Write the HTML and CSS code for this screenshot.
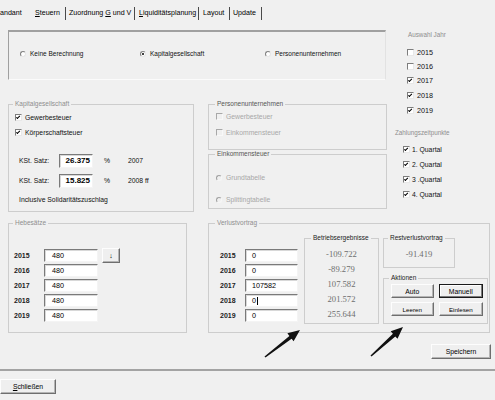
FILE: index.html
```html
<!DOCTYPE html>
<html lang="de">
<head>
<meta charset="utf-8">
<title>Steuern</title>
<link rel="stylesheet" href="styles.css">
</head>
<body>
<div class="win">
  <nav class="tabs">
    <span class="tab t-mandant">andant</span>
    <span class="tab t-steuern"><u>S</u>teuern</span>
    <span class="tab t-zuord">Zuordnung <u>G</u> und V</span>
    <span class="tab t-liq"><u>L</u>iquiditätsplanung</span>
    <span class="tab t-layout">Layout</span>
    <span class="tab t-update">Update</span>
  </nav>

  <div class="upper">
    <div class="leftcol">
      <div class="topframe">
        <div class="opt"><span class="radio"></span>Keine Berechnung</div>
        <div class="opt"><span class="radio on"></span>Kapitalgesellschaft</div>
        <div class="opt"><span class="radio"></span>Personenunternehmen</div>
      </div>
      <div class="groups">
        <fieldset class="grp kap">
          <legend class="lg lg-gray lg-4">Kapitalgesellschaft</legend>
          <div class="body kap-body">
            <div class="row"><span class="cb on"></span>Gewerbesteuer</div>
            <div class="row"><span class="cb on"></span>Körperschaftsteuer</div>
            <div class="row kst first">
              <span class="kst-lbl">KSt. Satz:</span>
              <span class="inp num">26.375</span>
              <span class="pct">%</span>
              <span>2007</span>
            </div>
            <div class="row kst second">
              <span class="kst-lbl">KSt. Satz:</span>
              <span class="inp num">15.825</span>
              <span class="pct">%</span>
              <span>2008 ff</span>
            </div>
            <div class="row incl">Inclusive Solidaritätszuschlag</div>
          </div>
        </fieldset>
        <div class="pcol">
          <fieldset class="grp pers">
            <legend class="lg lg-dark lg-6">Personenunternehmen</legend>
            <div class="body pers-body">
              <div class="row dis"><span class="cb dis"></span>Gewerbesteuer</div>
              <div class="row dis"><span class="cb dis"></span>Einkommensteuer</div>
            </div>
          </fieldset>
          <fieldset class="grp eink">
            <legend class="lg lg-dark lg-6">Einkommensteuer</legend>
            <div class="body eink-body">
              <div class="row dis"><span class="radio dis"></span>Grundtabelle</div>
              <div class="row dis second"><span class="radio dis"></span>Splittingtabelle</div>
            </div>
          </fieldset>
        </div>
      </div>
    </div>

    <div class="rightcol">
      <div class="hdr hdr-jahr">Auswahl Jahr</div>
      <div class="years">
        <div class="row yr h14"><span class="cb"></span>2015</div>
        <div class="row yr h14"><span class="cb"></span>2016</div>
        <div class="row yr"><span class="cb on"></span>2017</div>
        <div class="row yr"><span class="cb on"></span>2018</div>
        <div class="row yr"><span class="cb on"></span>2019</div>
      </div>
      <div class="hdr hdr-zahl">Zahlungszeitpunkte</div>
      <div class="quartale">
        <div class="row qt"><span class="cb on"></span>1. Quartal</div>
        <div class="row qt"><span class="cb on"></span>2. Quartal</div>
        <div class="row qt"><span class="cb on"></span>3 .Quartal</div>
        <div class="row qt"><span class="cb on"></span>4. Quartal</div>
      </div>
    </div>
  </div>

  <div class="lower">
    <fieldset class="grp hebe">
      <legend class="lg lg-gray lg-4">Hebesätze</legend>
      <div class="body hebe-body">
        <div class="row yrow"><span class="ylbl">2015</span><span class="inp hinp">480</span><span class="btn down">↓</span></div>
        <div class="row yrow"><span class="ylbl">2016</span><span class="inp hinp">480</span></div>
        <div class="row yrow"><span class="ylbl">2017</span><span class="inp hinp">480</span></div>
        <div class="row yrow"><span class="ylbl">2018</span><span class="inp hinp">480</span></div>
        <div class="row yrow"><span class="ylbl">2019</span><span class="inp hinp">480</span></div>
      </div>
    </fieldset>

    <fieldset class="grp verl">
      <legend class="lg lg-gray lg-6">Verlustvortrag</legend>
      <div class="body verl-body">
        <div class="vrows">
          <div class="row yrow"><span class="ylbl vl">2015</span><span class="inp vinp">0</span></div>
          <div class="row yrow"><span class="ylbl vl">2016</span><span class="inp vinp">0</span></div>
          <div class="row yrow"><span class="ylbl vl">2017</span><span class="inp vinp">107582</span></div>
          <div class="row yrow"><span class="ylbl vl">2018</span><span class="inp vinp">0<span class="caret"></span></span></div>
          <div class="row yrow"><span class="ylbl vl">2019</span><span class="inp vinp">0</span></div>
        </div>
        <fieldset class="grp betr">
          <legend class="lg lg-black lg-6">Betriebsergebnisse</legend>
          <div class="body betr-body">
            <div class="val">-109.722</div>
            <div class="val">-89.279</div>
            <div class="val">107.582</div>
            <div class="val">201.572</div>
            <div class="val">255.644</div>
          </div>
        </fieldset>
        <div class="rcol">
          <fieldset class="grp rest">
            <legend class="lg lg-black lg-4">Restverlustvortrag</legend>
            <div class="body rest-body">
              <div class="val">-91.419</div>
            </div>
          </fieldset>
          <fieldset class="grp akt">
            <legend class="lg lg-black lg-5">Aktionen</legend>
            <div class="body akt-body">
              <div class="brow">
                <span class="btn ab w43">Auto</span>
                <span class="btn ab w45 default">Manuell</span>
              </div>
              <div class="brow second">
                <span class="btn ab w43 small">Leeren</span>
                <span class="btn ab w45 small">Einlesen</span>
              </div>
            </div>
          </fieldset>
        </div>
      </div>
    </fieldset>
  </div>

  <div class="saverow"><span class="btn save">Speichern</span></div>
  <div class="sep"></div>
  <div class="closerow"><span class="btn close"><u>S</u>chließen</span></div>

  <svg class="arrows" width="495" height="400" viewBox="0 0 495 400" aria-hidden="true">
    <polygon points="300,330 293.6,341.3 291.6,338.7 265.5,357.6 264.5,356.4 289.4,335.9 287.4,333.3" fill="#111"/>
    <polygon points="403,327 397.5,338.8 395.3,336.4 371.5,356.6 370.5,355.4 392.9,333.7 390.7,331.3" fill="#111"/>
  </svg>
</div>
</body>
</html>
```

FILE: styles.css
```css
html, body {
  margin: 0;
  padding: 0;
  background: #f0f0f0;
}

.win {
  position: relative;
  width: 495px;
  height: 400px;
  overflow: hidden;
  background: #f0f0f0;
  font-family: "Liberation Sans", Arial, sans-serif;
  font-size: 6.8px;
  color: #111;
}

/* ---------- tabs ---------- */
.tabs {
  display: flex;
  align-items: flex-start;
  height: 30px;
  padding-top: 7px;
  box-sizing: border-box;
  font-size: 7.1px;
  color: #000;
}
.tab {
  height: 13px;
  line-height: 13px;
  box-sizing: border-box;
  border-right: 1px solid #4a4a4a;
  white-space: nowrap;
}
.t-mandant { margin-left: 0; width: 35px; border-right: none; }
.t-steuern { width: 31px; }
.t-zuord { width: 69px; padding-left: 3px; }
.t-liq { width: 64px; padding-left: 4px; }
.t-layout { width: 31px; padding-left: 4px; }
.t-update { width: 32px; padding-left: 3px; }

/* ---------- common controls ---------- */
.row {
  display: flex;
  align-items: center;
  height: 15px;
  white-space: nowrap;
}
.cb {
  position: relative;
  flex: none;
  width: 7px;
  height: 7px;
  box-sizing: border-box;
  background: #fff;
  border: 1px solid;
  border-color: #7d7d7d #e8e8e8 #e8e8e8 #7d7d7d;
  margin-right: 3px;
}
.cb.on::after {
  content: "";
  position: absolute;
  left: 1.3px;
  top: -0.2px;
  width: 1.4px;
  height: 3.2px;
  border: solid #000;
  border-width: 0 1.2px 1.2px 0;
  transform: rotate(45deg);
}
.cb.dis {
  background: #f0f0f0;
  border-color: #a8a8a8 #f8f8f8 #f8f8f8 #a8a8a8;
}
.radio {
  position: relative;
  flex: none;
  width: 6px;
  height: 6px;
  box-sizing: border-box;
  border-radius: 50%;
  background: #fff;
  border: 1px solid;
  border-color: #808080 #e6e6e6 #e6e6e6 #808080;
  margin-right: 4px;
}
.radio.on::after {
  content: "";
  position: absolute;
  left: 1px;
  top: 1px;
  width: 2px;
  height: 2px;
  border-radius: 50%;
  background: #000;
}
.radio.dis {
  background: #f0f0f0;
  border-color: #a0a0a0 #f6f6f6 #f6f6f6 #a0a0a0;
}
.dis { color: #a8a8a8; }

.inp {
  display: flex;
  align-items: center;
  box-sizing: border-box;
  background: #fff;
  border: 1px solid;
  border-color: #7a7a7a #f4f4f4 #f4f4f4 #7a7a7a;
  box-shadow: inset 1px 1px 0 #d8d8d8;
  color: #000;
  font-size: 7.2px;
}
.btn {
  display: flex;
  align-items: center;
  justify-content: center;
  box-sizing: border-box;
  background: #efefef;
  border: 1px solid;
  border-color: #fdfdfd #6e6e6e #6e6e6e #fdfdfd;
  box-shadow: inset -1px -1px 0 #b4b4b4;
  color: #000;
  font-size: 6.8px;
  white-space: nowrap;
}
.btn.default {
  border-color: #1a1a1a;
  box-shadow: inset -1px -1px 0 #7a7a7a, inset 1px 1px 0 #fff;
}

/* ---------- fieldsets ---------- */
.grp {
  margin: 0;
  padding: 0;
  min-width: 0;
  border: 1px solid #cdcdcd;
  box-sizing: border-box;
}
.lg {
  padding: 0 2px;
  line-height: 8px;
  font-size: 6.5px;
}
.lg-gray { color: #8e8e8e; }
.lg-dark { color: #555; }
.lg-black { color: #222; }
.lg-4 { margin-left: 4px; }
.lg-5 { margin-left: 5px; }
.lg-6 { margin-left: 6px; }

/* ---------- upper area ---------- */
.upper {
  display: flex;
  height: 182px;
  padding-left: 8px;
}
.leftcol { width: 378px; flex: none; }
.topframe {
  height: 50px;
  box-sizing: border-box;
  border-top: 2px solid #a0a0a0;
  border-left: 1px solid #a0a0a0;
  border-right: 1px solid #e2e2e2;
  border-bottom: 1px solid #fbfbfb;
  padding: 0 0 4px 11px;
  display: grid;
  grid-template-columns: 120px 125px auto;
  align-items: center;
}
.opt {
  display: flex;
  align-items: center;
  font-size: 6.5px;
  white-space: nowrap;
}

.groups {
  display: flex;
  gap: 14px;
  margin-top: 20px;
}
.kap { width: 186px; flex: none; }
.kap-body { padding: 2px 0 4px 6px; }
.kst { font-size: 6.8px; }
.kst.first { margin-top: 13px; }
.kst.second { margin-top: 5px; }
.kst-lbl { width: 40px; margin-left: 4px; }
.inp.num {
  width: 34px;
  height: 14px;
  justify-content: flex-end;
  padding-right: 2px;
  font-weight: bold;
  font-size: 8px;
}
.pct { width: 24px; margin-left: 11px; }
.incl { margin-top: 4px; padding-left: 4px; }

.pcol { width: 179px; flex: none; }
.pers-body { padding: 1px 0 9px 7px; }
.pers-body .row + .row { margin-top: 1px; }
.eink-body { padding: 12px 0 1px 7px; }
.eink-body .row.second { margin-top: 7px; }

.rightcol {
  width: 109px;
  flex: none;
  display: flex;
  flex-direction: column;
}
.hdr {
  color: #8e8e8e;
  font-size: 6.3px;
  white-space: nowrap;
}
.hdr-jahr { height: 9px; line-height: 9px; margin-left: 22px; }
.years { margin-top: 6px; margin-left: 21px; }
.yr { font-size: 7.2px; color: #111; }
.yr.h14 { height: 14px; }
.hdr-zahl { height: 10px; line-height: 10px; margin-top: 10px; margin-left: 9px; }
.quartale { margin-top: 4px; margin-left: 17px; }
.qt { font-size: 6.8px; }
.qt .cb { margin-right: 2px; }

/* ---------- lower area ---------- */
.lower {
  display: flex;
  gap: 21px;
  margin-top: 7px;
  padding-left: 8px;
}
.hebe { width: 179px; flex: none; }
.hebe-body { padding: 21px 0 9px 5px; }
.ylbl {
  width: 30px;
  font-weight: bold;
  font-size: 7px;
  color: #222;
}
.ylbl.vl { width: 25px; }
.hinp { width: 54px; height: 13px; padding-left: 7px; }
.btn.down { width: 18px; height: 15px; margin-left: 4px; font-size: 7px; }

.verl { width: 282px; flex: none; }
.verl-body {
  display: flex;
  align-items: flex-start;
  padding: 0 1px 8px 11px;
}
.vrows { margin-top: 21px; }
.vinp { width: 53px; height: 13px; padding-left: 6px; }
.caret {
  display: inline-block;
  width: 1px;
  height: 8px;
  background: #000;
  margin-left: 0.5px;
}
.betr { width: 75px; flex: none; margin-left: 6px; margin-top: 7px; }
.betr-body { padding: 5px 0 1px; }
.val {
  height: 15px;
  line-height: 15px;
  text-align: center;
  font-family: "Liberation Serif", "Times New Roman", serif;
  font-size: 8.6px;
  color: #6e6e6e;
}
.rcol { width: 105px; flex: none; margin-left: 4px; margin-top: 7px; }
.rest { width: 72px; }
.rest-body { padding: 5px 0 5px; }
.akt { margin-top: 6px; }
.akt-body { padding: 2px 4px 7px 7px; }
.brow { display: flex; gap: 5px; height: 14px; }
.brow.second { margin-top: 4px; }
.btn.ab { height: 14px; }
.w43 { width: 43px; }
.w45 { width: 45px; }
.btn.small { font-size: 6.2px; }

.saverow {
  display: flex;
  justify-content: flex-end;
  margin-top: 11px;
  padding-right: 4px;
}
.btn.save { width: 60px; height: 15px; font-size: 6.8px; }
.sep {
  margin-top: 10px;
  height: 2px;
  background: #a3a3a3;
}
.closerow { margin-top: 8px; }
.btn.close { width: 56px; height: 15px; font-size: 6.8px; }

.arrows {
  position: absolute;
  left: 0;
  top: 0;
  pointer-events: none;
}
```
